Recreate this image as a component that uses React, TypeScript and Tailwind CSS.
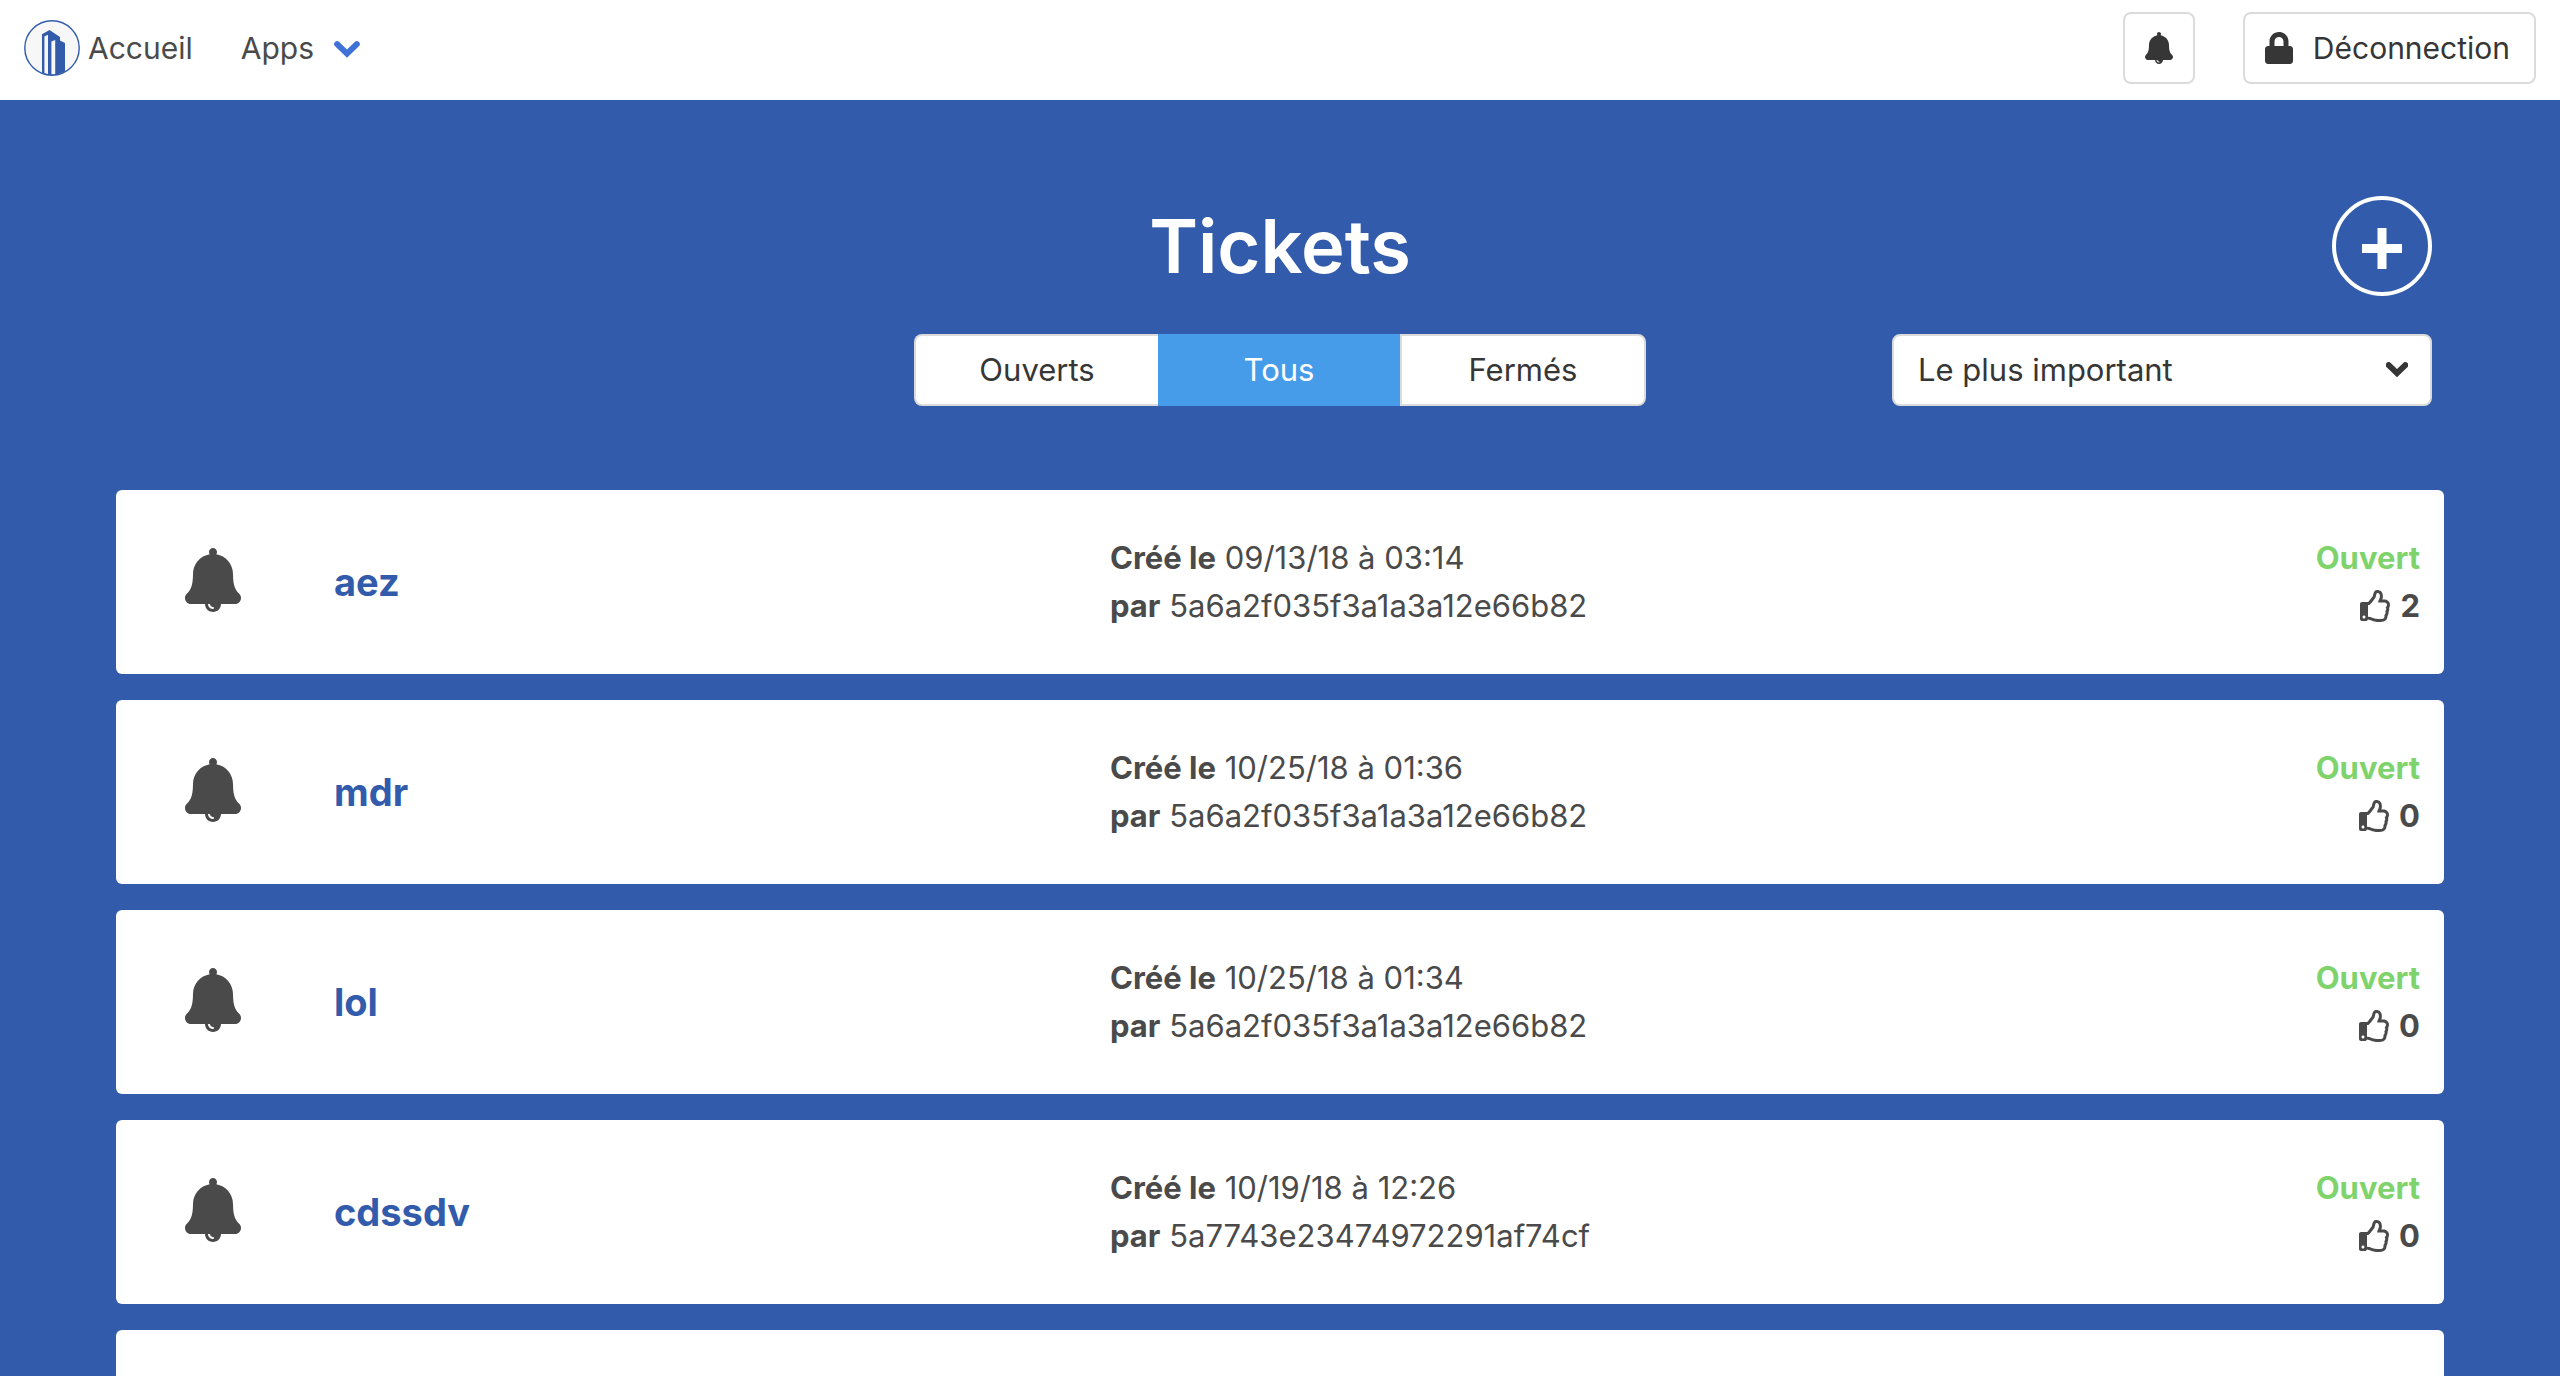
import { useState } from "react";
import { FaLock, FaRegThumbsUp } from "react-icons/fa";

type Ticket = {
  title: string;
  date: string;
  time: string;
  author: string;
  votes: number;
};

const tickets: Ticket[] = [
  { title: "aez", date: "09/13/18", time: "03:14", author: "5a6a2f035f3a1a3a12e66b82", votes: 2 },
  { title: "mdr", date: "10/25/18", time: "01:36", author: "5a6a2f035f3a1a3a12e66b82", votes: 0 },
  { title: "lol", date: "10/25/18", time: "01:34", author: "5a6a2f035f3a1a3a12e66b82", votes: 0 },
  { title: "cdssdv", date: "10/19/18", time: "12:26", author: "5a7743e23474972291af74cf", votes: 0 },
];

const filters = ["Ouverts", "Tous", "Fermés"];

function Bell({ className }: { className: string }) {
  return (
    <svg viewBox="0 0 448 512" fill="currentColor" className={className} aria-hidden="true">
      <path d="M433.884 366.059C411.634 343.809 384 316.118 384 208c0-79.394-57.831-145.269-133.663-157.83A31.845 31.845 0 0 0 256 32c0-17.673-14.327-32-32-32s-32 14.327-32 32c0 6.75 2.095 13.008 5.663 18.17C121.831 62.731 64 128.606 64 208c0 108.118-27.643 135.809-49.893 158.059C-16.042 396.208 5.325 448 48.048 448H160c0 35.346 28.654 64 64 64s64-28.654 64-64h111.943c42.638 0 64.151-51.731 33.941-81.941zM224 472a8 8 0 0 1 0 16c-22.056 0-40-17.944-40-40h16c0 13.234 10.766 24 24 24z" />
    </svg>
  );
}

function Logo() {
  return (
    <svg viewBox="0 0 56 56" className="size-14" aria-hidden="true">
      <circle cx="28" cy="28" r="27.2" fill="#f7f7f8" />
      <path d="M18 14.2 25.5 10 36 17v3.5l5 2.5v28.5A27 27 0 0 1 18 53.3Z" fill="#325cab" />
      <path d="M20.4 16.5 24 14.8V54l-3.6-.8Z" fill="#f7f7f8" />
      <path d="M27.4 21.6 31.2 20V54.6h-3.8Z" fill="#f7f7f8" />
      <circle cx="28" cy="28" r="27.2" fill="none" stroke="#325cab" strokeWidth="1.4" />
    </svg>
  );
}

function Chevron({ className, weight }: { className: string; weight: number }) {
  return (
    <svg viewBox="0 0 26 18" fill="none" stroke="currentColor" strokeWidth={weight} strokeLinecap="round" strokeLinejoin="miter" className={className} aria-hidden="true">
      <path d="M3.2 3.2 13 12.6 22.8 3.2" />
    </svg>
  );
}

function Navbar() {
  return (
    <nav className="flex h-[100px] items-center justify-between bg-white px-6 pb-1 text-[30px]">
      <div className="flex items-center gap-12">
        <a href="#accueil" className="flex items-center gap-2">
          <Logo />
          Accueil
        </a>
        <a href="#apps" className="flex items-center gap-5">
          Apps
          <Chevron weight={6} className="mt-1 h-[18px] w-[26px] text-[#3e72d8]" />
        </a>
      </div>
      <div className="flex items-center gap-12 text-[#363636]">
        <button type="button" aria-label="Notifications" className="flex size-[72px] items-center justify-center rounded-lg border-2 border-[#dbdbdb]">
          <Bell className="h-8 w-7" />
        </button>
        <button type="button" className="flex h-[72px] items-center gap-5 rounded-lg border-2 border-[#dbdbdb] pr-6 pl-5">
          <FaLock className="h-8 w-7" />
          Déconnection
        </button>
      </div>
    </nav>
  );
}

function Filters() {
  const [active, setActive] = useState("Tous");
  return (
    <div className="grid h-[72px] w-[732px] grid-cols-[244fr_242fr_246fr] text-[#363636]">
      {filters.map((name) => (
        <button
          key={name}
          type="button"
          aria-pressed={name === active}
          onClick={() => setActive(name)}
          className={
            name === active
              ? "border-2 border-[#469ce8] bg-[#469ce8] text-white first:rounded-l-lg last:rounded-r-lg"
              : "border-2 border-[#dbdbdb] bg-white first:rounded-l-lg first:border-r-0 last:rounded-r-lg"
          }
        >
          {name}
        </button>
      ))}
    </div>
  );
}

function SortSelect() {
  return (
    <div className="relative w-[540px] justify-self-end text-[#363636]">
      <select aria-label="Trier les tickets" className="h-[72px] w-full appearance-none rounded-lg border-2 border-[#dbdbdb] bg-white px-6">
        <option>Le plus important</option>
        <option>Le plus récent</option>
      </select>
      <Chevron weight={7} className="pointer-events-none absolute top-7 right-6 h-4 w-[22px]" />
    </div>
  );
}

function TicketCard({ ticket }: { ticket: Ticket }) {
  return (
    <article className="grid grid-cols-12 items-center rounded-md bg-white py-11">
      <div className="flex justify-center pb-1">
        <Bell className="h-16 w-14" />
      </div>
      <h2 className="col-span-4 px-6 text-[38px] leading-[48px] font-bold text-[#325cab]">
        <a href={`#${ticket.title}`}>{ticket.title}</a>
      </h2>
      <div className="col-span-5 px-6">
        <p>
          <strong className="font-bold">Créé le</strong> {ticket.date} à {ticket.time}
        </p>
        <p>
          <strong className="font-bold">par</strong> {ticket.author}
        </p>
      </div>
      <div className="col-span-2 flex flex-col items-end px-6 font-bold">
        <p className="text-[#7fd36d]">Ouvert</p>
        <p className="flex items-center gap-2">
          <FaRegThumbsUp className="size-8" />
          {ticket.votes}
        </p>
      </div>
    </article>
  );
}

export default function App() {
  return (
    <div className="h-screen overflow-hidden bg-[#325cab] font-[Inter,sans-serif] text-[31px] leading-[48px] text-[#4a4a4a]">
      <Navbar />
      <header className="grid grid-cols-[1fr_auto_1fr] items-center gap-y-[38px] px-32 pt-24">
        <h1 className="col-start-2 text-center text-[74px] leading-[100px] font-semibold text-white">Tickets</h1>
        <button type="button" aria-label="Nouveau ticket" className="flex size-[100px] items-center justify-center justify-self-end rounded-full border-4 border-white text-white">
          <svg viewBox="0 0 40 41" fill="currentColor" className="mt-1 h-[41px] w-10" aria-hidden="true">
            <path d="M15.5 0h9v16H40v9H24.5v16h-9V25H0v-9h15.5Z" />
          </svg>
        </button>
        <div className="col-start-2">
          <Filters />
        </div>
        <SortSelect />
      </header>
      <main className="flex flex-col gap-[26px] px-[116px] pt-[84px]">
        {tickets.map((ticket) => (
          <TicketCard key={ticket.title} ticket={ticket} />
        ))}
        <article className="h-[184px] rounded-md bg-white" aria-label="Ticket suivant" />
      </main>
    </div>
  );
}
